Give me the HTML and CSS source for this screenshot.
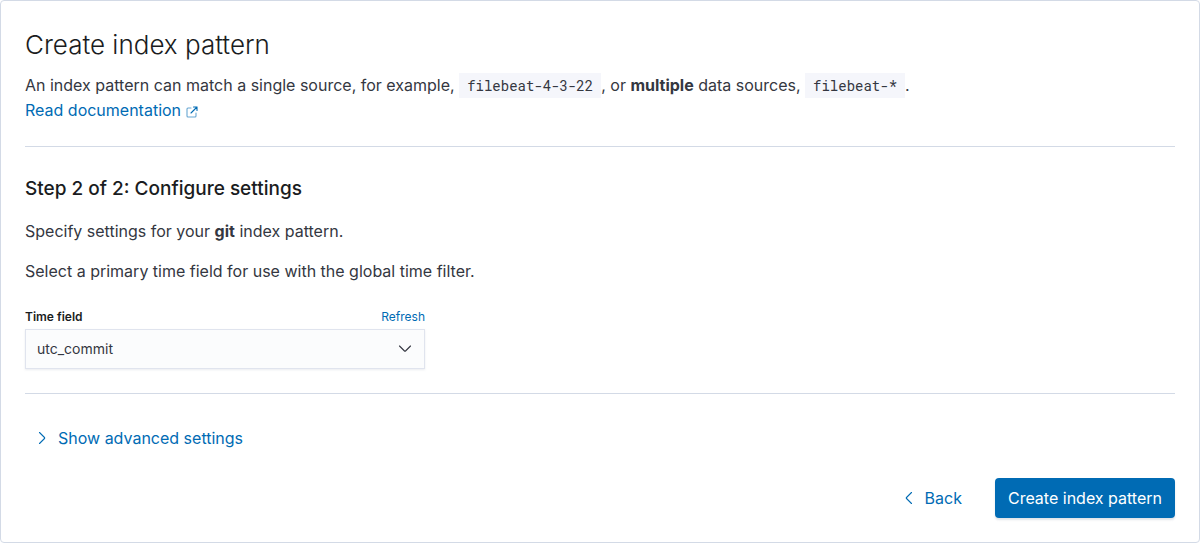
FILE: index.html
```html
<!DOCTYPE html>
<html lang="en">
<head>
<meta charset="utf-8">
<title>Create index pattern</title>
<link rel="stylesheet" href="styles.css">
</head>
<body>
<main class="panel">
  <header>
    <h1 class="title">Create index pattern</h1>
    <p class="intro">An index pattern can match a single source, for example, <code class="code">filebeat-4-3-22</code>, or <strong>multiple</strong> data sources, <code class="code">filebeat-*</code>.<br>
      <a class="link" href="#">Read documentation <svg class="external" viewBox="0 0 12 12" width="12" height="12" aria-hidden="true"><path class="frame" d="M5 2H2A1 1 0 0 0 1 3v7a1 1 0 0 0 1 1h7a1 1 0 0 0 1-1V7"/><path d="M7.500 1H11v3.500M11 1 5 7"/></svg></a></p>
  </header>
  <hr class="rule">
  <section>
    <h2 class="step">Step 2 of 2: Configure settings</h2>
    <p class="text">Specify settings for your <strong>git</strong> index pattern.</p>
    <p class="text">Select a primary time field for use with the global time filter.</p>
    <form class="field">
      <div class="field-head">
        <label class="label" for="time-field">Time field</label>
        <a class="refresh" href="#">Refresh</a>
      </div>
      <div class="select-wrap">
        <select class="select" id="time-field"><option>utc_commit</option></select>
        <svg class="chevron" viewBox="0 0 16 16" width="16" height="16" aria-hidden="true"><path d="m2.500 5 5 5q.5.5 1 0l5-5"/></svg>
      </div>
    </form>
  </section>
  <hr class="rule">
  <button class="advanced" type="button"><svg viewBox="0 0 16 16" width="16" height="16" aria-hidden="true"><path d="m5.500 2.500 5 5q.5.5 0 1l-5 5"/></svg>Show advanced settings</button>
  <footer class="actions">
    <button class="back" type="button"><svg viewBox="0 0 16 16" width="16" height="16" aria-hidden="true"><path d="m10.500 2.500-5 5q-.5.5 0 1l5 5"/></svg>Back</button>
    <button class="primary" type="button">Create index pattern</button>
  </footer>
</main>
</body>
</html>
```
FILE: styles.css
```css
* { box-sizing: border-box; }
body { margin: 0; background: #fff; color: #343741; font: 16px/24px Inter, sans-serif; }
h1, h2, p { margin: 0; }
svg { fill: none; stroke: currentColor; stroke-width: 1.1; stroke-linecap: round; stroke-linejoin: round; flex: none; }
a { color: #006bb4; text-decoration: none; }
button { font: inherit; border: 0; background: none; color: #006bb4; cursor: pointer; display: flex; align-items: center; height: 40px; }
.panel { min-height: 100vh; padding: 24px; border: 1px solid #d3dae6; border-radius: 4px; }
.title { font-size: 26px; line-height: 40px; font-weight: 300; color: #1a1c21; margin-bottom: 8px; }
.intro { line-height: 25px; }
.code { font: 14px/20px "Roboto Mono", "DejaVu Sans Mono", monospace; padding: 3px 8px; background: #f5f6fb; }
.external { vertical-align: -2px; }
.frame { opacity: 0.6; }
.rule { height: 1px; border: 0; background: #d3dae6; margin: 23px 0 24px; }
.step { font-size: 19px; line-height: 36px; font-weight: 500; color: #1a1c21; margin-bottom: 12px; }
.text { margin-bottom: 16px; }
.field { max-width: 400px; padding: 8px 0 1px; }
.field-head { display: flex; justify-content: space-between; font-size: 12px; line-height: 20px; margin-bottom: 2px; }
.label { font-weight: 600; color: #1a1c21; }
.select-wrap { position: relative; }
.select { appearance: none; display: block; width: 100%; height: 40px; padding: 0 40px 2px 11px; border: 1px solid #e0e4ee; border-radius: 0; background: #fbfcfd; box-shadow: 0 1px 2px #98a2b333; color: #343741; font: 14px Inter, sans-serif; }
.chevron { position: absolute; right: 12px; top: 12px; pointer-events: none; }
.advanced { padding: 0 9px; gap: 8px; }
.actions { display: flex; justify-content: flex-end; gap: 20px; margin-top: 20px; }
.back { padding: 0 13px; gap: 8px; }
.primary { padding: 0 13px; background: #006bb4; color: #fff; border-radius: 4px; box-shadow: 0 2px 2px #98a2b34d; }
```
